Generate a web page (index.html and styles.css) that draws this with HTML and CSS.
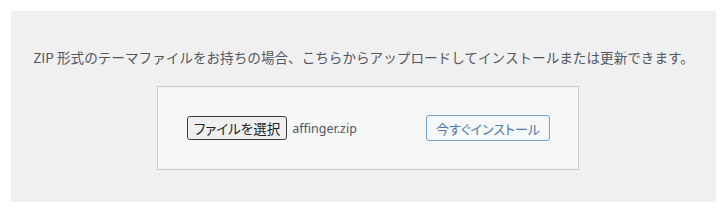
FILE: index.html
```html
<!DOCTYPE html>
<html lang="ja">
<head>
    <meta charset="UTF-8">
    <meta name="viewport" content="width=device-width, initial-scale=1.0">
    <title>テーマのアップロード</title>
    <link rel="stylesheet" href="styles.css">
</head>
<body>
    <div class="upload-theme">
        <p class="install-help">ZIP 形式のテーマファイルをお持ちの場合、こちらからアップロードしてインストールまたは更新できます。</p>
        <form class="wp-upload-form">
            <div class="file-field">
                <label class="file-button" for="themezip">ファイルを選択</label>
                <span class="file-name">affinger.zip</span>
                <input type="file" id="themezip" class="file-input">
            </div>
            <button type="button" class="button">今すぐインストール</button>
        </form>
    </div>
</body>
</html>
```

FILE: styles.css
```css
/* 基本スタイル */
body, html {
    margin: 0;
    padding: 0;
    background: #ffffff;
    font-family: "Noto Sans CJK JP", "Noto Sans", sans-serif;
}

/* アップロード領域 */
.upload-theme {
    margin: 11px 11px 0 11px;
    height: 191px;
    background: #f0f0f1;
    padding-top: 36px;
    box-sizing: border-box;
    display: flex;
    flex-direction: column;
    align-items: center;
}

/* 説明文 */
.install-help {
    margin: 0;
    font-size: 13.6px;
    line-height: 20px;
    color: #50575e;
    text-align: center;
}

/* フォーム */
.wp-upload-form {
    margin: 19px 0 0 9px;
    width: 422px;
    height: 84px;
    box-sizing: border-box;
    padding: 0 28px 0 29px;
    background: #f6f7f7;
    border: 1px solid #c9cacd;
    display: flex;
    align-items: center;
    justify-content: space-between;
}

.file-field {
    display: flex;
    align-items: center;
}

/* ファイル選択ボタン */
.file-button {
    height: 24px;
    box-sizing: border-box;
    padding: 0 6px;
    border: 1px solid #3c3c3c;
    border-radius: 3px;
    background: #efefef;
    color: #222;
    font-size: 13.5px;
    line-height: 22px;
    font-feature-settings: "palt";
    cursor: pointer;
}

.file-name {
    margin-left: 5px;
    font-family: "Noto Sans", sans-serif;
    font-size: 12.5px;
    color: #50575e;
}

.file-input {
    display: none;
}

/* インストールボタン */
.button {
    height: 26px;
    width: 124px;
    padding: 0;
    border: 1px solid #72a4d2;
    border-radius: 3px;
    background: #f6f7f7;
    color: #4f79a8;
    font-family: inherit;
    font-size: 13px;
    font-feature-settings: "palt";
    cursor: pointer;
}
```
